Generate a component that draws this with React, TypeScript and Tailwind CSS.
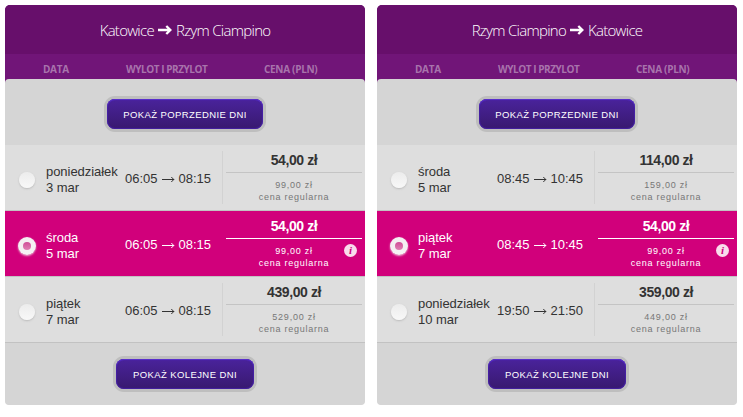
import { useState } from "react";
import clsx from "clsx";

type Flight = {
  day: string;
  date: string;
  departure: string;
  arrival: string;
  price: string;
  regular: string;
};

type Route = {
  from: string;
  to: string;
  selected: number;
  flights: Flight[];
};

const routes: Route[] = [
  {
    from: "Katowice",
    to: "Rzym Ciampino",
    selected: 1,
    flights: [
      { day: "poniedziałek", date: "3 mar", departure: "06:05", arrival: "08:15", price: "54,00 zł", regular: "99,00 zł" },
      { day: "środa", date: "5 mar", departure: "06:05", arrival: "08:15", price: "54,00 zł", regular: "99,00 zł" },
      { day: "piątek", date: "7 mar", departure: "06:05", arrival: "08:15", price: "439,00 zł", regular: "529,00 zł" },
    ],
  },
  {
    from: "Rzym Ciampino",
    to: "Katowice",
    selected: 1,
    flights: [
      { day: "środa", date: "5 mar", departure: "08:45", arrival: "10:45", price: "114,00 zł", regular: "159,00 zł" },
      { day: "piątek", date: "7 mar", departure: "08:45", arrival: "10:45", price: "54,00 zł", regular: "99,00 zł" },
      { day: "poniedziałek", date: "10 mar", departure: "19:50", arrival: "21:50", price: "359,00 zł", regular: "449,00 zł" },
    ],
  },
];

function TitleArrow() {
  return (
    <svg width="14" height="10" viewBox="0 0 14 10" className="mx-1 -mt-px shrink-0" fill="none" stroke="white" strokeWidth="2.4">
      <path d="M0 5H12.5M8.3 1L12.4 5L8.3 9" />
    </svg>
  );
}

function TimeArrow() {
  return (
    <svg width="13" height="7" viewBox="0 0 13 7" className="ml-1 mt-px shrink-0" fill="none" stroke="currentColor">
      <path d="M0 3.5H12M9.3 1L11.8 3.5L9.3 6" />
    </svg>
  );
}

function NavButton({ label, className }: { label: string; className: string }) {
  return (
    <button
      className={clsx(
        "flex h-[30px] items-center justify-center rounded-lg bg-linear-to-b from-[#4a239c] to-[#38196f] pt-[2px] text-[9.5px] tracking-[0.4px] text-white shadow-[0_0_0_3px_#bebebe,inset_0_1px_1px_#5b2fd0,inset_0_0_1px_1px_#4420a0]",
        className
      )}
    >
      {label}
    </button>
  );
}

function Radio({ checked }: { checked: boolean }) {
  return (
    <span
      className={clsx(
        "flex items-center justify-center rounded-full bg-linear-to-b",
        checked
          ? "-ml-px size-[18px] from-[#f4eef1] to-[#f5f2f4] shadow-[0_1px_2px_#e9b9d2]"
          : "size-4 from-[#ececec] to-[#f8f8f8] shadow-[0_1px_2px_#bbb]"
      )}
    >
      {checked && <span className="size-2 rounded-full bg-linear-to-b from-[#d04c97] to-[#df80b4]" />}
    </span>
  );
}

function FlightRow({ flight, selected, onSelect }: { flight: Flight; selected: boolean; onSelect: () => void }) {
  return (
    <div
      onClick={onSelect}
      className={clsx(
        "flex h-[66px] cursor-pointer border-b border-[#c2c2c2]",
        selected ? "bg-[#d1007b] text-white" : "bg-[#dedede] text-[#333]"
      )}
    >
      <div className="flex w-[41px] items-center pl-3.5 pt-[5px]">
        <Radio checked={selected} />
      </div>
      <div className="flex w-[79px] flex-col justify-center whitespace-nowrap pt-[5px] text-[13px] leading-4 tracking-[-0.05px]">
        <span>{flight.day}</span>
        <span>{flight.date}</span>
      </div>
      <div className="flex w-[97px] items-center pt-[2px] text-[13px]">
        <span>{flight.departure}</span>
        <TimeArrow />
        <span className="ml-1">{flight.arrival}</span>
      </div>
      <div
        className={clsx(
          "relative my-1.5 flex-1 border-l pl-[3px] pr-[3px] text-center",
          selected ? "border-transparent" : "border-[#d2d2d2]"
        )}
      >
        <div
          className={clsx(
            "h-[22px] border-b text-[14px] font-bold leading-[19px] tracking-[-0.4px]",
            selected ? "border-white" : "border-[#c4c4c4]"
          )}
        >
          {flight.price}
        </div>
        <div className={clsx("pt-1.5 text-[9px] leading-3 tracking-[0.75px]", selected ? "text-white" : "text-[#777]")}>
          <div>{flight.regular}</div>
          <div>cena regularna</div>
        </div>
        {selected && (
          <span className="absolute right-2 top-[27px] flex size-[13px] items-center justify-center rounded-full bg-[#f9dcec] font-['Liberation_Serif',serif] text-[11px] font-bold italic leading-none text-[#d1007b]">
            i
          </span>
        )}
      </div>
    </div>
  );
}

function RoutePanel({ route }: { route: Route }) {
  const [selected, setSelected] = useState(route.selected);

  return (
    <section className="h-[400px] w-[360px] rounded-[5px] bg-linear-to-b from-[#711578] from-50% to-[#d5d5d5] to-50%">
      <h2 className="flex h-[49px] items-center justify-center rounded-t-[5px] bg-[#670f6b] pt-px font-['Open_Sans',sans-serif] text-[15px] font-light tracking-[-0.72px] text-white">
        {route.from}
        <TitleArrow />
        {route.to}
      </h2>
      {/* Column names */}
      <div className="flex h-[25px] items-center pt-[5px] font-['Open_Sans',sans-serif] text-[10px] font-bold tracking-[-0.3px] text-[#a873ac]">
        <span className="w-[83px] pl-[38px]">DATA</span>
        <span className="w-[138px] whitespace-nowrap pl-[38px] tracking-[-0.45px]">WYLOT I PRZYLOT</span>
        <span className="whitespace-nowrap pl-[38px]">CENA (PLN)</span>
      </div>
      <div className="h-[326px] rounded-[4px] bg-[#d5d5d5]">
        <div className="flex h-[66px] justify-center pt-5">
          <NavButton label="POKAŻ POPRZEDNIE DNI" className="w-[156px]" />
        </div>
        {route.flights.map((flight, i) => (
          <FlightRow key={flight.date} flight={flight} selected={i === selected} onSelect={() => setSelected(i)} />
        ))}
        <div className="flex justify-center pt-4">
          <NavButton label="POKAŻ KOLEJNE DNI" className="w-[138px]" />
        </div>
      </div>
    </section>
  );
}

export default function App() {
  return (
    <main className="flex h-[417px] w-[743px] gap-3 bg-white p-[5px] font-['Liberation_Sans',Arial,sans-serif]">
      {routes.map((route) => (
        <RoutePanel key={route.from} route={route} />
      ))}
    </main>
  );
}
